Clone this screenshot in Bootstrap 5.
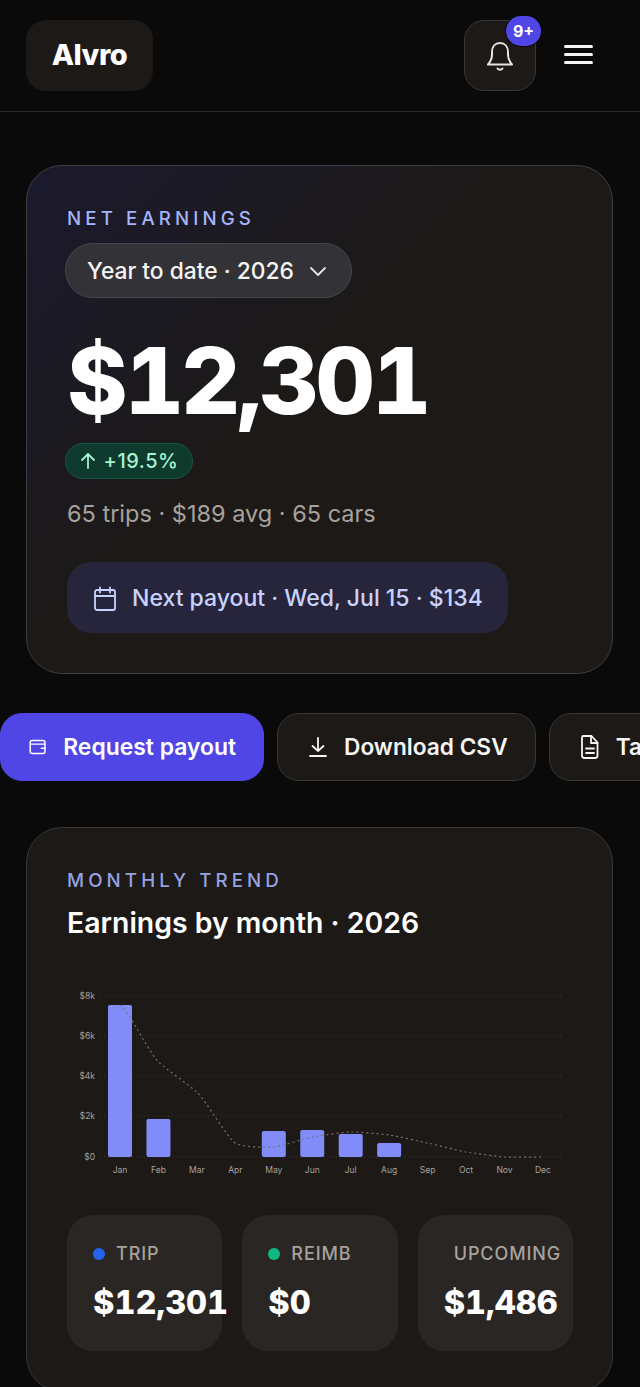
<!DOCTYPE html>
<html lang="en">
<head>
    <meta charset="UTF-8">
    <meta name="viewport" content="width=device-width, initial-scale=1.0">
    <title>Alvro earnings</title>
    <link href="https://cdn.jsdelivr.net/npm/bootstrap@5.3.0/dist/css/bootstrap.min.css" rel="stylesheet">
    <style>
        html, body { height: 100%; overflow: hidden; }
        body { background: #0a0a0a; color: #fff; font-family: Inter, "Liberation Sans", sans-serif; }
        .top-bar { height: 112px; padding: 20px 47px 20px 26px; border-bottom: 1px solid #292725; }
        .brand-box { width: 127px; height: 71px; padding-bottom: 2px; background: #1c1917; border-radius: 20px; font-size: 29px; font-weight: 800; letter-spacing: -.5px; }
        .bell-box { width: 72px; height: 71px; background: #1c1917; border: 1px solid #3a3835; border-radius: 20px; margin-right: 28px; }
        .bell-count { top: -5px; right: -6px; width: 35px; height: 30px; background: #4f46e5; font-size: 16px; font-weight: 700; box-shadow: 0 0 0 1px #0a0a0a; }
        .menu-lines { width: 29px; margin-top: -2px; }
        .menu-lines span { display: block; height: 3.5px; background: #f5f5f4; border-radius: 2px; margin: 4.5px 0; }
        .panel { margin: 0 27px 0 26px; background: #1c1917; border: 1px solid #3a3835; border-radius: 36px; padding: 41px 40px 40px; }
        .hero-panel { margin-top: 53px; height: 509px; background: linear-gradient(135deg, #1b1a2e 0%, #1c1917 45%); border-color: #3f3d44; }
        .eyebrow { color: #a5b4fc; font-size: 18.7px; font-weight: 500; letter-spacing: .22em; line-height: 24px; }
        .period-pill { margin: 12px 0 0 -2px; width: 287px; height: 55px; padding: 1px 21px 0; gap: 15px; background: #333236; border: 1px solid #47464b; color: #f5f5f4; font-size: 22.8px; font-weight: 500; }
        .big-total { font-size: 92px; font-weight: 800; line-height: 1; letter-spacing: -3px; margin: 37px 0 0; font-variant-numeric: tabular-nums; }
        .delta-pill { margin: 16px 0 0 -2px; width: 128px; height: 36px; background: #0f3a2e; border: 1px solid #1c5544; color: #a7f3d0; font-size: 20px; font-weight: 500; letter-spacing: .5px; }
        .trip-line { color: #a8a29e; font-size: 23.5px; margin-top: 19px; line-height: 32px; }
        .payout-box { margin-top: 32px; width: 441px; height: 71px; padding: 2px 0 0 26px; background: #27253b; border-radius: 24px; color: #c7d2fe; font-size: 23px; font-weight: 500; gap: 15px; }
        .action-row { margin-top: 39px; gap: 13px; overflow: hidden; }
        .action-btn { flex: none; height: 68px; border-radius: 22px; background: #1c1917; border: 1px solid #3a3835; color: #f5f5f4; font-size: 22.7px; font-weight: 600; gap: 16px; padding: 0 27px 0 30px; white-space: nowrap; }
        .action-btn.is-main { width: 264px; padding-left: 28px; gap: 17px; background: #4f46e5; border-color: #4f46e5; color: #fff; font-size: 22.9px; }
        .trend-panel { margin-top: 46px; }
        .trend-panel .eyebrow { color: #97a2e0; }
        .trend-title { font-size: 28.4px; font-weight: 600; line-height: 36px; margin: 12px 0 0; }
        .chart-svg { display: block; margin: 35px 0 0 -41px; width: 586px; height: 220px; }
        .chart-svg text { font-family: Inter, "Liberation Sans", sans-serif; font-size: 8.5px; fill: #a8a29e; }
        .stat-row { margin: 19px -1px 0 0; gap: 20px; }
        .stat-box { flex: 1 1 0; min-width: 0; height: 136px; background: #292623; border-radius: 26px; padding: 27px 26px 26px; }
        .stat-label { gap: 11px; color: #a8a29e; font-size: 18px; font-weight: 500; letter-spacing: .05em; line-height: 24px; white-space: nowrap; }
        .stat-dot { width: 12px; height: 12px; border-radius: 50%; flex: none; }
        .stat-dot.is-blue { background: #2563eb; }
        .stat-dot.is-green { background: #10b981; }
        .stat-dot.is-none { width: 0; margin-right: -1px; }
        .stat-value { font-size: 32.5px; font-weight: 800; line-height: 40px; margin-top: 17px; white-space: nowrap; font-variant-numeric: tabular-nums; }
    </style>
</head>
<body>
    <header class="top-bar d-flex align-items-center justify-content-between">
        <div class="brand-box d-flex align-items-center justify-content-center">Alvro</div>
        <div class="d-flex align-items-center">
            <div class="bell-box position-relative d-flex align-items-center justify-content-center">
                <svg width="30" height="32" viewBox="0 0 30 32" fill="none" stroke="#e7e5e4" stroke-width="2" stroke-linecap="round" stroke-linejoin="round">
                    <path d="M15 3c-5 0-8 3.800-8 9v3c0 4-1.500 6.500-4 9.500h24c-2.500-3-4-5.500-4-9.500v-3c0-5.200-3-9-8-9z"/>
                    <path d="M12.500 28.500c1 1.500 4 1.500 5 0"/>
                </svg>
                <span class="bell-count position-absolute rounded-pill d-flex align-items-center justify-content-center">9+</span>
            </div>
            <div class="menu-lines"><span></span><span></span><span></span></div>
        </div>
    </header>

    <section class="panel hero-panel">
        <div class="eyebrow">NET EARNINGS</div>
        <div class="period-pill rounded-pill d-flex align-items-center">
            <span>Year to date · 2026</span>
            <svg width="18" height="18" viewBox="0 0 18 18" fill="none" stroke="#e7e5e4" stroke-width="1.800" stroke-linecap="round" stroke-linejoin="round"><path d="M2 6l7 7 7-7"/></svg>
        </div>
        <h1 class="big-total">$12,301</h1>
        <div class="delta-pill rounded-pill d-flex align-items-center justify-content-center gap-2">
            <svg width="16" height="18" viewBox="0 0 16 18" fill="none" stroke="#a7f3d0" stroke-width="1.800" stroke-linecap="round" stroke-linejoin="round"><path d="M8 16V2M2 8l6-6 6 6"/></svg>
            <span>+19.5%</span>
        </div>
        <div class="trip-line">65 trips · $189 avg · 65 cars</div>
        <div class="payout-box d-flex align-items-center">
            <svg width="24" height="26" viewBox="0 0 24 26" fill="none" stroke="#c7d2fe" stroke-width="1.800" stroke-linecap="round" stroke-linejoin="round"><rect x="2" y="4" width="20" height="20" rx="2"/><path d="M2 10h20M7 1.500v5M17 1.500v5"/></svg>
            <span>Next payout · Wed, Jul 15 · $134</span>
        </div>
    </section>

    <div class="action-row d-flex">
        <div class="action-btn is-main d-flex align-items-center">
            <svg width="21" height="20" viewBox="0 0 21 20" fill="none" stroke="#fff" stroke-width="1.800" stroke-linecap="round" stroke-linejoin="round"><rect x="1.500" y="2" width="18" height="16" rx="2.500"/><path d="M1.500 6.500h18M15 11.500h4.500"/></svg>
            <span>Request payout</span>
        </div>
        <div class="action-btn d-flex align-items-center">
            <svg width="20" height="22" viewBox="0 0 20 22" fill="none" stroke="#f5f5f4" stroke-width="1.800" stroke-linecap="round" stroke-linejoin="round"><path d="M10 2v13M4.500 10l5.500 5 5.500-5M2 20h16"/></svg>
            <span>Download CSV</span>
        </div>
        <div class="action-btn d-flex align-items-center">
            <svg width="20" height="26" viewBox="0 0 20 26" fill="none" stroke="#f5f5f4" stroke-width="1.800" stroke-linecap="round" stroke-linejoin="round"><path d="M3.500 2h8l6 6.500v13a2.500 2.500 0 0 1-2.500 2.500H4.500A2.500 2.500 0 0 1 2 21.500V3.500A1.500 1.500 0 0 1 3.500 2z"/><path d="M11 2v7h6.500M6 14.500h8M6 19h8"/></svg>
            <span>Tax summary</span>
        </div>
    </div>

    <section class="panel trend-panel">
        <div class="eyebrow">MONTHLY TREND</div>
        <h2 class="trend-title">Earnings by month · 2026</h2>
        <svg id="earnChart" class="chart-svg" viewBox="26 976 586 220"></svg>
        <div class="stat-row d-flex">
            <div class="stat-box">
                <div class="stat-label d-flex align-items-center"><span class="stat-dot is-blue"></span>TRIP</div>
                <div class="stat-value">$12,301</div>
            </div>
            <div class="stat-box">
                <div class="stat-label d-flex align-items-center"><span class="stat-dot is-green"></span>REIMB</div>
                <div class="stat-value">$0</div>
            </div>
            <div class="stat-box">
                <div class="stat-label d-flex align-items-center"><span class="stat-dot is-none"></span>UPCOMING</div>
                <div class="stat-value">$1,486</div>
            </div>
        </div>
    </section>

    <script>
        // chart coordinates are kept in page pixels, the viewBox lines them up
        const months = ['Jan','Feb','Mar','Apr','May','Jun','Jul','Aug','Sep','Oct','Nov','Dec'];
        const tops = [1005, 1119, null, null, 1131, 1130, 1134, 1143, null, null, null, null];
        const trend = [1005, 1062, 1092, 1143, 1147, 1137, 1132, 1135, 1143, 1152, 1157, 1157];
        const gridY = [[996,'$8k'], [1036,'$6k'], [1076,'$4k'], [1116,'$2k'], [1157,'$0']];
        const xOf = i => 120 + i * 38.45;
        let svg = '';

        gridY.forEach(([y, label]) => {
            svg += `<line x1="100" x2="563" y1="${y}" y2="${y}" stroke="#3a3835" stroke-width="1" stroke-dasharray="1 3"/>`;
            svg += `<text x="95" y="${y + 3}" text-anchor="end">${label}</text>`;
        });
        months.forEach((m, i) => {
            if (tops[i]) {
                svg += `<rect x="${xOf(i) - 12}" y="${tops[i]}" width="24" height="${1157 - tops[i]}" rx="2" fill="#818cf8"/>`;
            }
            svg += `<text x="${xOf(i)}" y="1173" text-anchor="middle">${m}</text>`;
        });

        // smooth line through the points, low tension so it does not overshoot
        let d = `M${xOf(0)} ${trend[0]}`;
        for (let i = 1; i < trend.length; i++) {
            const prevX = xOf(i - 1), curX = xOf(i);
            const slopeA = (trend[i] - trend[Math.max(i - 2, 0)]) / 12;
            const slopeB = (trend[Math.min(i + 1, trend.length - 1)] - trend[i - 1]) / 12;
            d += ` C${prevX + 8} ${trend[i - 1] + slopeA} ${curX - 8} ${trend[i] - slopeB} ${curX} ${trend[i]}`;
        }
        svg += `<path d="${d}" fill="none" stroke="#78716c" stroke-width="1.200" stroke-dasharray="2 3"/>`;
        document.getElementById('earnChart').innerHTML = svg;
    </script>
    <script src="https://cdn.jsdelivr.net/npm/bootstrap@5.3.0/dist/js/bootstrap.bundle.min.js"></script>
</body>
</html>
